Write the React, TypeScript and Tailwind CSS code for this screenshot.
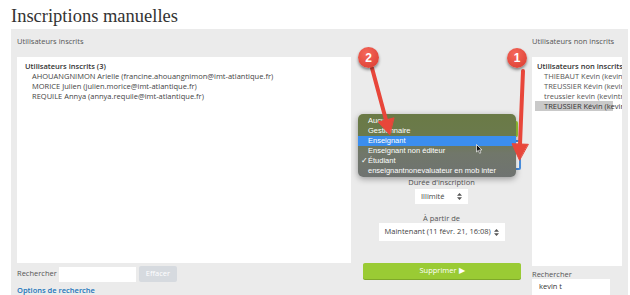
import React from 'react';

const enrolled = [
  'AHOUANGNIMON Arielle (francine.ahouangnimon@imt-atlantique.fr)',
  'MORICE Julien (julien.morice@imt-atlantique.fr)',
  'REQUILE Annya (annya.requile@imt-atlantique.fr)',
];

const candidates = [
  { label: 'THIEBAUT Kevin (kevin.thiebaut@imt-atlantique.fr)', selected: false },
  { label: 'TREUSSIER Kévin (kevin.treussier@imt-atlantique.fr)', selected: false },
  { label: 'treussier kevin (kevintreussier@gmail.com)', selected: false },
  { label: 'TREUSSIER Kévin (kevin.treussier@telecom-bretagne.eu)', selected: true },
];

const roles = [
  'Aucun',
  'Gestionnaire',
  'Enseignant',
  'Enseignant non éditeur',
  'Étudiant',
  'enseignantnonevaluateur en mob inter',
];

const UpDown = () => (
  <svg width="5" height="7" viewBox="0 0 5 7" className="shrink-0">
    <path d="M2.5 0 L5 2.8 L0 2.8 Z M2.5 7 L0 4.2 L5 4.2 Z" fill="#555" />
  </svg>
);

const Badge = ({ n, className }: { n: string; className: string }) => (
  <div
    className={`absolute flex items-center justify-center rounded-full bg-[radial-gradient(circle_at_40%_30%,#f5685b,#d93a2e)] font-['Liberation_Sans',sans-serif] text-[12px] font-bold text-white shadow-[0_2px_3px_rgba(0,0,0,0.45)] ${className}`}
  >
    {n}
  </div>
);

export default function App() {
  return (
    <div className="relative h-[295px] w-[630px] overflow-hidden bg-white font-['Open_Sans',sans-serif] text-[7.5px] text-[#555]">
      {/* Page title */}
      <h1 className="h-[29px] pl-[11px] pt-[7px] font-['Liberation_Serif',serif] text-[18.5px] leading-none text-[#333]">
        Inscriptions manuelles
      </h1>

      {/* Enrolment panel */}
      <div className="ml-[11px] mr-[2px] flex h-[266px] bg-[#ebebeb] pl-[6px] pt-[7px]">
        {/* Enrolled users */}
        <div className="flex w-[334px] min-w-0 shrink-0 flex-col">
          <div className="h-[10px] leading-[10px]">Utilisateurs inscrits</div>
          <div className="mt-[11px] h-[212px] overflow-hidden whitespace-nowrap bg-white pl-[8px] pt-[4px] leading-[10px]">
            <div className="font-semibold text-[#333]">Utilisateurs inscrits (3)</div>
            {enrolled.map((u) => (
              <div key={u} className="pl-[7px] text-[#444]">
                {u}
              </div>
            ))}
          </div>
          <div className="mt-[3px] flex h-[16px] items-center">
            <span className="w-[42px]">Rechercher</span>
            <div className="h-[15px] w-[77px] bg-white" />
            <div className="ml-[3px] flex h-[16px] w-[38px] items-center justify-center rounded-[2px] bg-[#d6dadf] text-white">
              Effacer
            </div>
          </div>
          <div className="mt-[3px] font-semibold leading-[10px] text-[#1a75bb]">Options de recherche</div>
        </div>

        {/* Actions */}
        <div className="flex w-[181px] shrink-0 flex-col">
          <div className="ml-[12px] mt-[85px] flex h-[16px] w-[155px] items-center justify-center rounded-[2px] bg-[#9acb34] text-white">
            ◀ Ajouter
          </div>
          <div className="ml-[11px] mt-[3px] h-[30px] w-[159px] rounded-[2px] border-2 border-[#4a8fe0] bg-white" />
          <div className="mt-[7px] text-center leading-[10px]">Durée d'inscription</div>
          <div className="mx-auto mt-[2px] flex h-[15px] w-[53px] items-center justify-between bg-white px-[6px] text-[#444]">
            <span>Illimité</span>
            <UpDown />
          </div>
          <div className="mt-[10px] h-[9px] text-center leading-[9px]">À partir de</div>
          <div className="mx-auto flex h-[18px] w-[126px] items-center justify-between bg-white px-[6px] text-[#444]">
            <span>Maintenant (11 févr. 21, 16:08)</span>
            <UpDown />
          </div>
          <div className="ml-[12px] mt-[22px] flex h-[16px] w-[158px] items-center justify-center rounded-[2px] bg-[#9acb34] text-white shadow-[0_1px_0_#7fa82a]">
            Supprimer ▶
          </div>
        </div>

        {/* Potential users */}
        <div className="flex w-[90px] min-w-0 shrink-0 flex-col">
          <div className="h-[10px] whitespace-nowrap leading-[10px]">Utilisateurs non inscrits</div>
          <div className="mt-[11px] h-[212px] w-[90px] overflow-hidden whitespace-nowrap bg-white pt-[4px] leading-[10px]">
            <div className="pl-[5px] font-semibold text-[#333]">Utilisateurs non inscrits correspondants (4)</div>
            {candidates.map((c) => (
              <div
                key={c.label}
                className={`ml-[3px] w-[78px] pl-[9px] ${c.selected ? 'bg-[#c9c9c9] text-[#333]' : 'text-[#555]'}`}
              >
                {c.label}
              </div>
            ))}
          </div>
          <div className="mt-[3px] leading-[10px]">Rechercher</div>
          <div className="flex h-[16px] w-[78px] items-center bg-white pl-[7px] text-[#333]">kevin t</div>
        </div>
      </div>

      {/* Open role menu */}
      <div className="absolute left-[358px] top-[114px] h-[63px] w-[158px] rounded-[5px] bg-[linear-gradient(180deg,#6a7a46_0%,#6b7a4c_35%,#71776a_62%,#6f7371_100%)] pt-[2px] font-['Liberation_Sans',sans-serif] text-[7.5px] text-white shadow-[0_2px_6px_rgba(0,0,0,0.35)]">
        {roles.map((r) => (
          <div
            key={r}
            className={`relative h-[10px] pl-[10px] leading-[10px] ${r === 'Enseignant' ? 'bg-[#3b8eee]' : ''}`}
          >
            {r === 'Étudiant' && <span className="absolute left-[3px]">✓</span>}
            {r}
          </div>
        ))}
      </div>

      {/* Mouse cursor */}
      <svg className="absolute left-[476px] top-[144px]" width="7" height="10" viewBox="0 0 7 10">
        <path d="M0.5 0.5 L0.5 8 L2.3 6.3 L3.6 9.3 L4.8 8.8 L3.6 5.9 L6 5.9 Z" fill="#111" stroke="#fff" strokeWidth="0.7" />
      </svg>

      {/* Annotation arrows */}
      <svg className="pointer-events-none absolute left-0 top-0" width="630" height="295" viewBox="0 0 630 295">
        <g fill="#e8463a" stroke="#e8463a" strokeLinecap="round" strokeLinejoin="round">
          <line x1="372" y1="68" x2="386" y2="120" strokeWidth="4" />
          <polygon points="393.7,117.9 378.3,122.1 389.6,134.5" strokeWidth="1" />
          <line x1="523" y1="71" x2="520" y2="144" strokeWidth="4" />
          <polygon points="528,144.3 512,143.7 519.4,160" strokeWidth="1" />
        </g>
      </svg>

      <Badge n="2" className="left-[358px] top-[47px] h-[21px] w-[21px]" />
      <Badge n="1" className="left-[507px] top-[48px] h-[20px] w-[20px]" />
    </div>
  );
}
